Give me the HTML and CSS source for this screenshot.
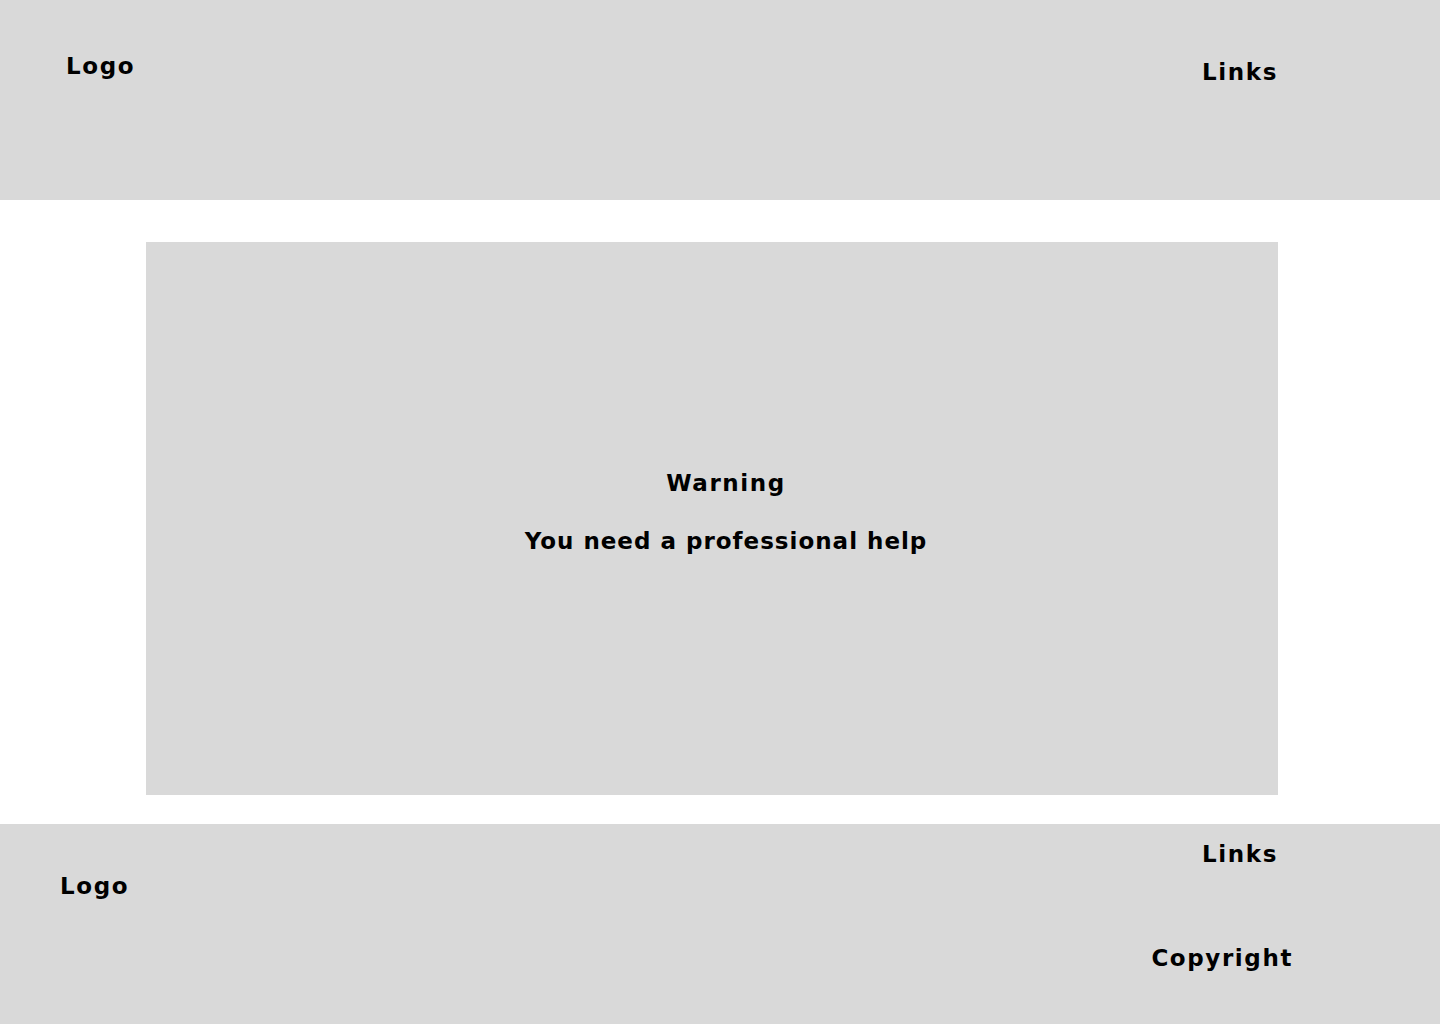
FILE: index.html
```html
<!doctype html>
<html>
	<head>
		<meta charset="utf-8"/>
		<meta name="viewport" content="width=device-width, initial-scale=1" />
		<title>Warning</title>
		<link rel="stylesheet" href="styles.css">
	</head>
	<body>
		<header class="bar top-bar">
			<div class="label logo">Logo</div>
			<nav class="label links">Links</nav>
		</header>

		<main class="page">
			<section class="warning-box">
				<h1 class="label">Warning</h1>
				<p class="label message">You need a professional help</p>
			</section>
		</main>

		<footer class="bar bottom-bar">
			<div class="label logo">Logo</div>
			<div class="foot-right">
				<nav class="label links">Links</nav>
				<div class="label copyright">Copyright</div>
			</div>
		</footer>
	</body>
</html>
```

FILE: styles.css
```css
html, body {
	margin: 0;
	padding: 0;
}

body {
	background: #fff;
	color: #000;
	font-family: "DejaVu Sans", "Liberation Sans", sans-serif;
	width: 1440px;
	height: 1024px;
	overflow: hidden;
}

.label {
	margin: 0;
	font-size: 23px;
	font-weight: bold;
	letter-spacing: 1.6px;
	line-height: 28px;
}

.bar {
	background: #d9d9d9;
	height: 200px;
	box-sizing: border-box;
	display: flex;
	justify-content: space-between;
	align-items: flex-start;
}

.top-bar {
	padding: 52px 162px 0 66px;
}

.top-bar .links {
	margin-top: 6px;
}

.page {
	padding: 42px 162px 29px 146px;
}

.warning-box {
	background: #d9d9d9;
	height: 553px;
	box-sizing: border-box;
	padding: 0 0 14px 28px;
	display: flex;
	flex-direction: column;
	justify-content: center;
	align-items: center;
	gap: 30px;
}

.message {
	letter-spacing: 1px;
}

.bottom-bar {
	padding: 16px 147px 0 60px;
}

.bottom-bar .logo {
	margin-top: 32px;
}

.foot-right {
	display: flex;
	flex-direction: column;
	align-items: flex-end;
	gap: 76px;
}

.bottom-bar .links {
	margin-right: 15px;
}
```
